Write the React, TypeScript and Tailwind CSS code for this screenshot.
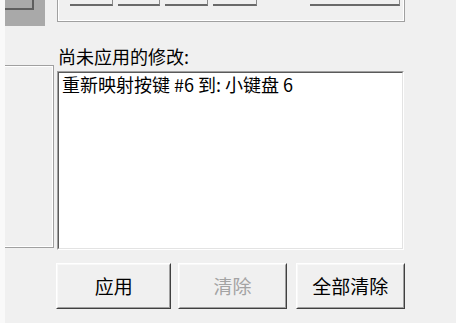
import React from "react";

const cjk = "font-['Noto_Sans_CJK_SC','Noto_Sans',sans-serif]";

function RaisedButton({ label, width, disabled }: { label: string; width: string; disabled?: boolean }) {
  return (
    <div className={`${width} h-[46px] border border-t-white border-l-white border-r-[#404040] border-b-[#404040]`}>
      <div className="h-full w-full border border-t-[#f8f8f8] border-l-[#f8f8f8] border-r-[#a0a0a0] border-b-[#a0a0a0] bg-[#f0f0f0] flex items-center justify-center">
        <span className={`${cjk} text-[19px] leading-[22px] ${disabled ? "text-[#a3a3a3]" : "text-black"}`}>{label}</span>
      </div>
    </div>
  );
}

function ButtonStub({ width }: { width: string }) {
  return <div className={`${width} h-[6px] border-b-2 border-r border-b-[#6a6a6a] border-r-[#8a8a8a] bg-[#f0f0f0]`} />;
}

export default function App() {
  return (
    <div className="w-[456px] h-[323px] bg-[#f0f0f0] flex overflow-hidden">
      <div className="w-[5px] h-full bg-[#f9f9f9]" />

      <div className="w-[49px] flex flex-col">
        <div className="w-[40px] h-[26px] bg-[#a9a9a9]">
          <div className="w-[29px] h-[10px] border-r-2 border-b-2 border-[#5e5e5e]" />
        </div>
        <div className="mt-[39px] h-[183px] border-t border-r border-b border-[#a0a0a0]">
          <div className="h-full border-t border-r border-b border-white bg-[#f0f0f0]" />
        </div>
      </div>

      <div className="ml-[3px] w-[348px] flex flex-col">
        <div className="h-[22px] border-l border-r border-b border-[#a0a0a0]">
          <div className="h-full border-l border-r border-b border-white flex pl-[11px]">
            <ButtonStub width="w-[43px]" />
            <div className="w-[5px]" />
            <ButtonStub width="w-[42px]" />
            <div className="w-[5px]" />
            <ButtonStub width="w-[43px]" />
            <div className="w-[5px]" />
            <ButtonStub width="w-[44px]" />
            <div className="w-[53px]" />
            <ButtonStub width="w-[90px]" />
          </div>
        </div>

        <div className={`${cjk} mt-[24px] text-[18px] leading-[21px] text-black pl-[1px]`}>尚未应用的修改:</div>

        <div className="mt-[4px] w-[347px] h-[179px] border border-t-[#a0a0a0] border-l-[#a0a0a0] border-r-white border-b-white">
          <div className="h-full border border-t-[#5a5a5a] border-l-[#5a5a5a] border-r-[#e3e3e3] border-b-[#e3e3e3] bg-white pt-[1px] pl-[3px]">
            <div className={`${cjk} text-[18px] leading-[21px] text-black`}>重新映射按键 #6 到: 小键盘 6</div>
          </div>
        </div>

        <div className="mt-[13px] -ml-[1px] flex">
          <RaisedButton label="应用" width="w-[116px]" />
          <div className="w-[7px]" />
          <RaisedButton label="清除" width="w-[109px]" disabled />
          <div className="w-[9px]" />
          <RaisedButton label="全部清除" width="w-[110px]" />
        </div>
      </div>
    </div>
  );
}
